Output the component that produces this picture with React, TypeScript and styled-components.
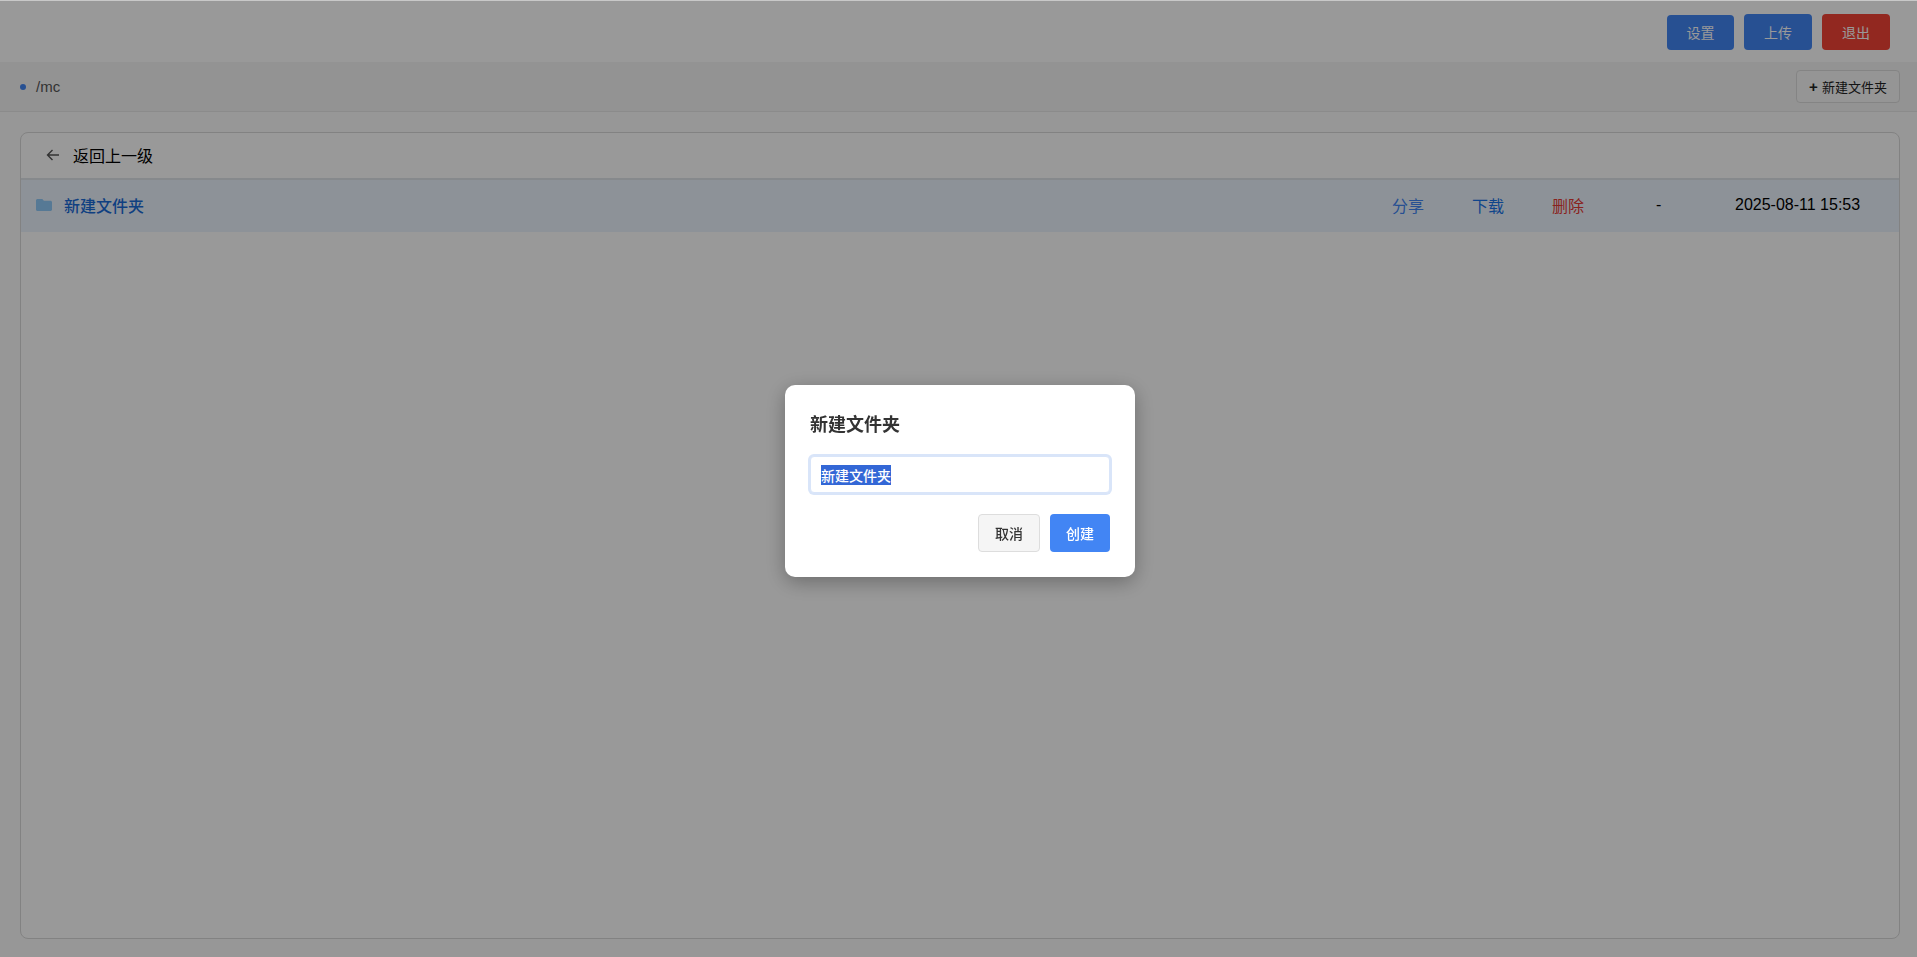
import React, { useEffect, useRef } from "react";
import styled, { createGlobalStyle } from "styled-components";

const Global = createGlobalStyle`
  html, body { margin: 0; padding: 0; height: 100%; }
  body {
    font-family: "Liberation Sans", "Noto Sans CJK SC", sans-serif;
    background: #fff;
    overflow: hidden;
  }
  * { box-sizing: border-box; }
`;

const Page = styled.div`
  height: 957px;
  display: flex;
  flex-direction: column;
  background: #fcfcfc;
  border-top: 1px solid #c8c8c8;
`;

const Header = styled.header`
  height: 61px;
  display: flex;
  justify-content: flex-end;
  align-items: center;
  gap: 10px;
  padding: 0 27px 0 0;
  background: #fff;
`;

const HeaderButton = styled.button<{ $danger?: boolean; $wide?: boolean }>`
  width: ${(p) => (p.$wide ? 68 : 67)}px;
  height: ${(p) => (p.$wide ? 36 : 35)}px;
  margin-top: ${(p) => (p.$wide ? 0 : 1)}px;
  border: none;
  border-radius: 4px;
  background: ${(p) => (p.$danger ? "#f44336" : "#4285f4")};
  color: #fff;
  font: 14px "Liberation Sans", "Noto Sans CJK SC", sans-serif;
  padding: 0;
`;

const PathBar = styled.div`
  height: 50px;
  display: flex;
  align-items: center;
  justify-content: space-between;
  padding: 0 17px 0 20px;
  background: #f5f5f5;
  border-bottom: 1px solid #e8e8e8;
`;

const PathLabel = styled.div`
  display: flex;
  align-items: center;
  gap: 10px;
  font-size: 15px;
  color: #555;
`;

const Dot = styled.span`
  width: 6px;
  height: 6px;
  border-radius: 50%;
  background: #4285f4;
`;

const NewFolderButton = styled.button`
  width: 104px;
  height: 33px;
  margin-top: -1px;
  display: flex;
  align-items: center;
  justify-content: center;
  gap: 4px;
  background: #f8f8f8;
  border: 1px solid #ddd;
  border-radius: 4px;
  color: #222;
  font: 13px "Liberation Sans", "Noto Sans CJK SC", sans-serif;
  padding: 0;
`;

const Plus = styled.b`
  font-size: 15px;
  line-height: 1;
`;

const Main = styled.main`
  flex: 1;
  padding: 20px 17px 18px 20px;
  display: flex;
`;

const Panel = styled.section`
  flex: 1;
  border: 1px solid #d9d9d9;
  border-radius: 8px;
  background: #fff;
  overflow: hidden;
`;

const BackRow = styled.div`
  height: 45px;
  display: flex;
  align-items: center;
  gap: 12px;
  padding: 0 0 2px 24px;
  font-size: 16px;
  color: #000;
`;

const FileRow = styled.div`
  height: 54px;
  display: flex;
  align-items: center;
  padding: 0 0 3px 15px;
  background: #ecf4fd;
  border-top: 2px solid #e0e4ea;
  font-size: 16px;
`;

const FileName = styled.span`
  flex: 1;
  margin-left: 12px;
  font-weight: 500;
  color: #1a6bd8;
`;

const Action = styled.span<{ $color: string; $width: number }>`
  width: ${(p) => p.$width}px;
  color: ${(p) => p.$color};
`;

const Size = styled.span`
  width: 79px;
  color: #000;
`;

const DateCell = styled.span`
  width: 164px;
  font-size: 16px;
  color: #000;
`;

const Overlay = styled.div`
  position: fixed;
  inset: 1px 0 0;
  display: flex;
  background: rgba(0, 0, 0, 0.4);
  align-items: center;
  justify-content: center;
`;

const Dialog = styled.div`
  width: 350px;
  height: 192px;
  margin: 4px 0 0 3px;
  padding: 25px;
  background: #fff;
  border-radius: 10px;
  box-shadow: 0 5px 20px rgba(0, 0, 0, 0.3);
`;

const Title = styled.h3`
  margin: 0 0 16px;
  height: 30px;
  font-size: 18px;
  line-height: 30px;
  font-weight: 700;
  color: #333;
`;

const NameInput = styled.input`
  display: block;
  width: 300px;
  height: 37px;
  padding: 0 10px;
  border: 1px solid #d9e5f9;
  border-radius: 4px;
  outline: none;
  box-shadow: 0 0 0 2px #d9e5f9;
  font: 500 14px "Liberation Sans", "Noto Sans CJK SC", sans-serif;
  color: #333;
  &::selection {
    background: #3367d6;
    color: #fff;
  }
`;

const Actions = styled.div`
  display: flex;
  justify-content: flex-end;
  gap: 10px;
  margin-top: 21px;
`;

const CancelButton = styled.button`
  width: 62px;
  height: 38px;
  background: #f5f5f5;
  border: 1px solid #ddd;
  border-radius: 4px;
  color: #333;
  font: 500 14px "Liberation Sans", "Noto Sans CJK SC", sans-serif;
  padding: 0;
`;

const CreateButton = styled.button`
  width: 60px;
  height: 38px;
  background: #4285f4;
  border: none;
  border-radius: 4px;
  color: #fff;
  font: 500 14px "Liberation Sans", "Noto Sans CJK SC", sans-serif;
  padding: 0;
`;

function BackArrow() {
  return (
    <svg width="16" height="16" viewBox="0 0 16 16" fill="none" stroke="#555" strokeWidth="1.4">
      <path d="M14 8H2.500M7.500 3 2.500 8l5 5" />
    </svg>
  );
}

function FolderIcon() {
  return (
    <svg width="16" height="14" viewBox="0 0 16 14" fill="#90caf9">
      <path d="M1.500 1h4.800l1.600 1.800h6.600c.8 0 1.500.7 1.500 1.500v7.200c0 .8-.7 1.500-1.500 1.500H1.500C.7 13 0 12.300 0 11.500v-9C0 1.700.7 1 1.500 1z" />
    </svg>
  );
}

export default function App() {
  const inputRef = useRef<HTMLInputElement>(null);
  useEffect(() => {
    inputRef.current?.focus();
    inputRef.current?.select();
  }, []);

  return (
    <>
      <Global />
      <Page>
        <Header>
          <HeaderButton>设置</HeaderButton>
          <HeaderButton $wide>上传</HeaderButton>
          <HeaderButton $wide $danger>退出</HeaderButton>
        </Header>
        <PathBar>
          <PathLabel>
            <Dot />
            /mc
          </PathLabel>
          <NewFolderButton>
            <Plus>+</Plus> 新建文件夹
          </NewFolderButton>
        </PathBar>
        <Main>
          <Panel>
            <BackRow>
              <BackArrow />
              返回上一级
            </BackRow>
            <FileRow>
              <FolderIcon />
              <FileName>新建文件夹</FileName>
              <Action $color="#4285f4" $width={80}>分享</Action>
              <Action $color="#1a73e8" $width={80}>下载</Action>
              <Action $color="#e53935" $width={104}>删除</Action>
              <Size>-</Size>
              <DateCell>2025-08-11 15:53</DateCell>
            </FileRow>
          </Panel>
        </Main>
      </Page>
      <Overlay>
        <Dialog>
          <Title>新建文件夹</Title>
          <NameInput ref={inputRef} defaultValue="新建文件夹" />
          <Actions>
            <CancelButton>取消</CancelButton>
            <CreateButton>创建</CreateButton>
          </Actions>
        </Dialog>
      </Overlay>
    </>
  );
}
